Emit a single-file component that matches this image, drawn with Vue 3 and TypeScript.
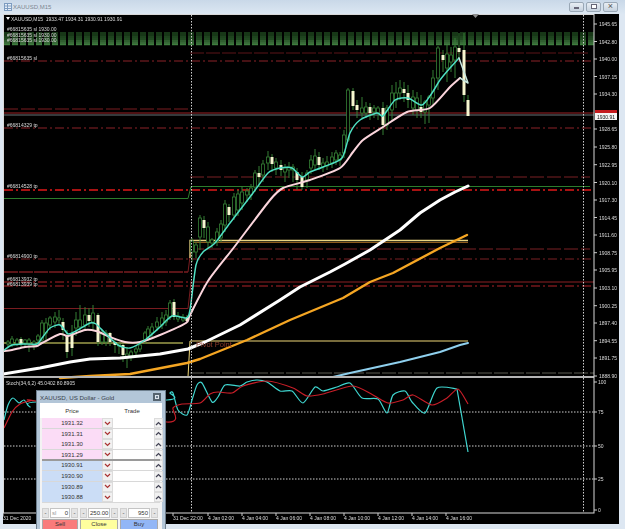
<script setup lang="ts">
type Pt = number[]

const pts = (a: Pt[]) => a.map(p => p.join(',')).join(' ')

// catmull-rom through the points, the indicators are not straight segments
const smooth = (a: Pt[]) => {
  let d = `M${a[0][0]} ${a[0][1]}`
  for (let i = 0; i < a.length - 1; i++) {
    const p0 = a[Math.max(i - 1, 0)]
    const p1 = a[i]
    const p2 = a[i + 1]
    const p3 = a[Math.min(i + 2, a.length - 1)]
    const k = 0.12
    d += ` C${(p1[0] + (p2[0] - p0[0]) * k).toFixed(1)} ${(p1[1] + (p2[1] - p0[1]) * k).toFixed(1)} ${(p2[0] - (p3[0] - p1[0]) * k).toFixed(1)} ${(p2[1] - (p3[1] - p1[1]) * k).toFixed(1)} ${p2[0]} ${p2[1]}`
  }
  return d
}

// x, wick top, body top, body bottom, wick bottom, bear?
const candles: number[][] = [
  [8,340,342,344,348,0],[12,336,339,344,347,0],[17,338,340,344,346,0],[21,337,339,344,347,1],[25,339,340,343,346,0],[29,338,340,343,352,0],[34,340,342,345,350,0],[38,334,336,340,344,0],
  [42,320,323,340,343,0],[46,318,323,333,340,0],[50,316,318,325,330,0],[55,312,317,322,328,0],[59,310,318,320,325,0],[63,318,322,330,340,1],[67,330,335,352,358,1],[72,325,333,348,356,1],
  [76,312,320,328,336,0],[80,305,320,327,333,0],[85,307,315,325,330,0],[89,308,315,321,327,1],[93,305,313,322,330,0],[98,313,315,342,346,1],[102,330,333,342,345,0],[106,330,333,342,346,0],
  [110,332,333,342,346,1],[115,338,342,345,353,1],[119,342,344,346,354,0],[123,344,345,355,362,1],[127,347,354,358,368,0],[131,350,352,356,361,0],[136,346,349,352,356,0],[140,342,345,349,352,0],
  [145,331,333,340,344,0],[148,326,329,337,341,0],[152,323,327,333,337,0],[157,317,322,327,331,0],[162,312,318,325,329,0],[166,310,315,322,326,0],[170,300,303,317,320,0],[174,299,302,317,320,1],
  [178,312,316,319,322,0],[183,314,317,320,322,0],[187,315,318,321,323,1],[192,238,241,252,262,0],[196,242,245,252,258,0],[200,215,218,237,250,0],[204,216,220,228,238,1],[208,222,227,242,248,0],
  [212,238,240,243,248,0],[217,228,232,242,246,0],[221,220,224,238,242,0],[225,200,204,225,232,0],[229,204,207,215,222,1],[234,193,197,215,220,0],[238,190,194,210,216,0],[242,186,192,203,210,0],
  [247,188,191,195,202,0],[251,184,188,195,200,0],[255,170,173,187,192,0],[259,166,173,177,186,1],[263,160,164,175,182,0],[268,151,157,163,170,0],[272,154,157,164,172,1],[276,158,162,168,175,0],
  [281,160,165,170,176,1],[285,164,168,172,182,0],[289,162,167,170,178,0],[293,164,167,170,182,0],[297,168,172,180,190,1],[302,172,177,187,190,1],[307,170,173,180,188,0],[311,155,160,168,174,0],
  [315,149,156,165,170,0],[319,152,157,165,170,1],[323,158,163,167,172,0],[327,156,162,166,170,0],[332,152,157,163,168,0],[336,150,153,160,165,0],[340,152,155,160,166,0],[344,130,135,153,158,0],
  [348,88,90,140,142,0],[353,88,91,106,110,1],[357,100,105,110,118,1],[362,97,108,113,118,0],[366,102,107,113,118,0],[370,103,107,113,120,1],[374,105,108,112,118,0],[378,106,108,113,120,0],
  [383,102,108,125,135,1],[387,105,108,125,130,0],[392,85,93,110,122,0],[396,82,93,100,108,0],[400,80,88,93,100,0],[404,82,89,93,102,1],[408,85,93,100,108,1],[413,90,97,108,115,0],
  [417,92,98,110,118,0],[421,95,107,112,118,1],[425,100,102,112,124,0],[429,95,97,105,123,0],[433,70,78,98,105,0],[438,46,48,78,90,0],[443,50,55,60,72,1],[447,45,54,68,82,0],[451,47,55,62,72,0],
  [455,38,47,60,78,0],[459,33,48,52,58,1],[464,33,50,95,102,1],[468,95,100,116,116,1],
]

const cyan = smooth([[4,350],[12,345],[24,344],[37,344],[42,338],[50,328],[60,325],[68,334],[76,331],[90,323],[96,324],[105,333],[118,345],[130,348],[145,340],[160,327],[172,316],[186,318],[190,310],[196,265],[203,252],[215,243],[230,223],[253,193],[268,173],[280,168],[292,168],[302,177],[310,172],[323,167],[342,158],[350,133],[360,120],[377,113],[383,116],[395,100],[408,98],[422,105],[432,93],[440,80],[450,68],[459,58]])
const pink = smooth([[4,351],[12,350],[25,347],[37,346],[42,343],[60,334],[68,336],[85,330],[96,331],[110,337],[125,342],[140,342],[160,335],[186,323],[190,315],[208,281],[235,246],[270,200],[283,188],[310,180],[340,168],[353,152],[363,140],[383,127],[407,112],[430,108],[450,87],[460,78]])
const maTail = pts([[459,58],[468,83],[460,78]])
const whiteMa = pts([[3,374],[40,368],[70,362],[90,359],[120,358],[160,354],[188,349],[205,342],[240,325],[280,300],[300,287],[330,272],[345,264],[370,250],[400,230],[420,213],[440,200],[455,192],[468,186]])
const orangeMa = pts([[60,378],[90,376],[130,374],[187,363],[200,359],[247,340],[290,320],[343,298],[370,282],[393,273],[440,248],[467,235]])
const blueMa = pts([[333,377],[350,373],[400,362],[440,352],[460,345],[468,343]])
const stochMain = smooth([[4,420],[8,405],[13,398],[19,403],[24,400],[30,407],[36,402],[167,400],[170,393],[173,393],[178,410],[187,415],[192,400],[197,385],[202,383],[212,402],[218,397],[225,385],[240,386],[247,382],[257,380],[267,382],[280,391],[292,391],[303,403],[315,387],[323,391],[337,387],[350,383],[362,398],[378,399],[387,413],[393,395],[405,391],[412,402],[425,413],[437,388],[457,389]])
const stochTail = pts([[457,389],[468,452]])
const stochSignal = smooth([[4,428],[12,412],[20,404],[30,401],[36,401],[167,422],[173,408],[182,404],[200,403],[210,394],[218,392],[232,393],[243,386],[267,381],[293,388],[307,396],[323,394],[353,386],[373,395],[388,403],[403,400],[413,395],[432,405],[447,398],[458,389],[468,404]])

// the stacked stop orders, darker at the top of the block
const bandLines = [
  { y: 33, c: '#1f4a1f' }, { y: 35, c: '#1f4a1f' }, { y: 37, c: '#285a28' }, { y: 39, c: '#2c622c' },
  { y: 41, c: '#3f7d3f' }, { y: 43, c: '#4a8a4a' }, { y: 44.5, c: '#3f7d3f' },
]

const prices = [
  ['1945.65', 24], ['1942.80', 41.5], ['1940.00', 59], ['1937.15', 76.5], ['1934.30', 94], ['1928.65', 129],
  ['1925.80', 147], ['1922.95', 164.7], ['1920.10', 182.5], ['1917.30', 200], ['1914.45', 217.5], ['1911.60', 235],
  ['1908.75', 252.7], ['1905.95', 270], ['1903.10', 288], ['1900.25', 305.7], ['1897.40', 323], ['1894.55', 340.7],
  ['1891.75', 358], ['1888.90', 376],
] as [string, number][]

const stochScale = [['100', 382], ['75', 412], ['50', 446], ['25', 479], ['0', 510]] as [string, number][]

const times = [
  ['31 Dec 2020', 3], ['31 Dec 22:00', 173], ['4 Jan 02:00', 208], ['4 Jan 04:00', 242], ['4 Jan 06:00', 276],
  ['4 Jan 08:00', 310], ['4 Jan 10:00', 344], ['4 Jan 12:00', 378], ['4 Jan 14:00', 412], ['4 Jan 16:00', 446],
] as [string, number][]

const stackLabels = [31, 36.5, 42]

const askRows = ['1931.32', '1931.31', '1931.30', '1931.29']
const bidRows = ['1930.91', '1930.90', '1930.89', '1930.88']
</script>

<template>
  <div class="window">
    <div class="titlebar">
      <svg class="app-icon" width="8" height="8" viewBox="0 0 8 8">
        <rect x="0.5" y="0.5" width="7" height="7" fill="#e6eef8" stroke="#7d9cc0" />
        <path d="M1 3h6M1 5.500h6M3.500 1v6" stroke="#7d9cc0" fill="none" />
      </svg>
      <span class="title-text">XAUUSD,M15</span>
      <div class="win-buttons">
        <span class="win-btn"><i class="min-glyph"></i></span>
        <span class="win-btn"><i class="max-glyph"></i></span>
        <span class="win-btn close">×</span>
      </div>
    </div>

    <div class="chart">
      <svg width="616" height="510" viewBox="3 14 616 510" class="plot">
        <rect x="3" y="14" width="616" height="510" fill="#000" />

        <!-- order levels behind the bars -->
        <g fill="none">
          <line v-for="b in bandLines" :key="b.y" x1="4" x2="594" :y1="b.y" :y2="b.y" :stroke="b.c" stroke-width="1.3" stroke-dasharray="6 2" />
          <line x1="190" x2="590" y1="53" y2="53" stroke="#5c1418" stroke-dasharray="14 2" />
          <line x1="4" x2="594" y1="61" y2="61" stroke="#8c2228" stroke-dasharray="9 3 2 3" />
          <line x1="4" x2="188" y1="109" y2="109" stroke="#7a1c20" stroke-dasharray="14 3" />
          <line x1="4" x2="594" y1="128" y2="128" stroke="#8c2228" stroke-dasharray="9 3 2 3" />
          <line x1="190" x2="590" y1="177" y2="177" stroke="#7a2024" stroke-dasharray="14 3" />
          <line x1="4" x2="594" y1="190" y2="190" stroke="#e01818" stroke-width="1.5" stroke-dasharray="9 3 2 3" />
          <polyline points="4,198.5 188,198.5 191,186.5 590,186.5" stroke="#2c7d2c" />
          <line x1="190" x2="590" y1="249" y2="249" stroke="#7a2024" stroke-dasharray="14 3" />
          <line x1="4" x2="594" y1="259" y2="259" stroke="#7a2024" stroke-dasharray="9 3 2 3" />
          <line x1="4" x2="188" y1="272" y2="272" stroke="#7a1c20" stroke-width="1.3" stroke-dasharray="14 1" />
          <polyline points="188,272 191,249" stroke="#7a1c20" />
          <line x1="190" x2="594" y1="282" y2="282" stroke="#8c2024" />
          <line x1="4" x2="188" y1="282" y2="282" stroke="#b02228" stroke-dasharray="9 3 2 3" />
          <line x1="4" x2="594" y1="286" y2="286" stroke="#b02228" stroke-dasharray="9 3 2 3" />
          <polyline points="4,308.5 188,308.5 191,282" stroke="#7a1c20" />
          <line x1="190" x2="594" y1="373" y2="373" stroke="#5a5a50" stroke-dasharray="14 2" />
          <line x1="4" x2="183" y1="343" y2="343" stroke="#ecec70" />
          <polyline points="188,377 190,341 468,341" stroke="#f0d878" />
          <polyline points="190,258 190,240.5 468,240.5" stroke="#e8d480" stroke-width="1.3" />
          <line x1="190" x2="468" y1="242.5" y2="242.5" stroke="#8c5a1c" />
          <line x1="4" x2="594" y1="113" y2="113" stroke="#9c2226" />
          <line x1="4" x2="594" y1="115" y2="115" stroke="#6a7478" />
        </g>

        <!-- bars -->
        <g v-for="c in candles" :key="c[0]">
          <line :x1="c[0]" :x2="c[0]" :y1="c[1]" :y2="c[4]" stroke="#357f35" />
          <rect :x="c[0] - 1.5" :y="c[2]" width="3" :height="c[3] - c[2]" :fill="c[5] ? '#f6f6cf' : '#000'" :stroke="c[5] ? 'none' : '#357f35'" stroke-width="0.8" />
        </g>

        <!-- moving averages -->
        <g fill="none" stroke-linejoin="round" stroke-linecap="round">
          <polyline :points="blueMa" stroke="#8fd0ee" stroke-width="2" />
          <polyline :points="orangeMa" stroke="#f5a623" stroke-width="2.4" />
          <polyline :points="whiteMa" stroke="#fff" stroke-width="3" />
          <path :d="pink" stroke="#fbd5dc" stroke-width="2" />
          <path :d="cyan" stroke="#4fe0c4" stroke-width="1.5" />
          <polyline :points="maTail" stroke="#c8e8e0" stroke-width="1.5" />
        </g>

        <text x="196" y="347" class="pivot">Pivot Point</text>
        <text v-for="y in stackLabels" :key="y" x="7" :y="y" class="lbl">#66815635 sl 1930.00</text>
        <text x="7" y="60" class="lbl">#66815635 sl</text>
        <text x="7" y="127" class="lbl">#66814329 tp</text>
        <text x="7" y="188" class="lbl">#66814528 tp</text>
        <text x="7" y="258" class="lbl">#66814900 tp</text>
        <text x="7" y="280.500" class="lbl">#66813932 tp</text>
        <text x="7" y="286" class="lbl">#66813939 tp</text>

        <!-- stochastic window -->
        <line x1="3" x2="594" y1="377" y2="377" stroke="#b4b4b4" stroke-width="2" />
        <g stroke="#cfcfcf" stroke-dasharray="1.5 1.5">
          <line x1="4" x2="594" y1="412" y2="412" />
          <line x1="4" x2="594" y1="446" y2="446" />
          <line x1="4" x2="594" y1="479" y2="479" />
          <line x1="191.5" x2="191.5" y1="15" y2="513" />
          <line x1="583.5" x2="583.5" y1="15" y2="513" />
        </g>
        <g fill="none" stroke-linejoin="round">
          <path :d="stochMain" stroke="#3fd6d0" stroke-width="1.2" />
          <polyline :points="stochTail" stroke="#3fd6d0" stroke-width="1.2" />
          <path :d="stochSignal" stroke="#c81e28" stroke-width="1.2" />
        </g>
        <text x="6" y="385" class="lbl">Stoch(34,6,2) 45.0402 80.8905</text>

        <!-- chart frame and scales -->
        <rect x="3.5" y="14.5" width="590.500" height="498.500" stroke="#d8d8d8" fill="none" />
        <path d="M472 14h7l-3.500 4z" fill="#8c8c8c" />
        <path d="M6 17h4l-2 3z" fill="#fff" />
        <text x="11" y="21" class="lbl">XAUUSD,M15 &#160;1933.47 1934.31 1930.91 1930.91</text>

        <g v-for="p in prices" :key="p[0]">
          <line x1="594" x2="597" :y1="p[1]" :y2="p[1]" stroke="#ccc" />
          <text x="599" :y="p[1] + 2" class="lbl">{{ p[0] }}</text>
        </g>
        <g v-for="p in stochScale" :key="p[0]">
          <line x1="594" x2="597" :y1="p[1]" :y2="p[1]" stroke="#ccc" />
          <text x="598" :y="p[1] + 2" class="lbl">{{ p[0] }}</text>
        </g>
        <rect x="595" y="110" width="22" height="4" fill="#c41a1e" />
        <rect x="595" y="113" width="22" height="7" fill="#f4f4f4" />
        <text x="597" y="118.500" class="lbl-dark">1930.91</text>

        <g v-for="t in times" :key="t[0]">
          <line :x1="t[1]" :x2="t[1]" y1="513" y2="516" stroke="#ccc" />
          <text :x="t[1]" y="520" class="lbl">{{ t[0] }}</text>
        </g>
      </svg>
    </div>

    <!-- one click trading window -->
    <div class="depth">
      <div class="depth-title">
        <span>XAUUSD, US Dollar - Gold</span>
        <span class="depth-close"></span>
      </div>
      <div class="depth-body">
        <div class="depth-head">
          <span>Price</span>
          <span>Trade</span>
        </div>
        <div v-for="p in askRows" :key="p" class="row">
          <span class="price ask">{{ p }}</span>
          <span class="step down"><svg width="7" height="5" viewBox="0 0 7 5"><path d="M1 1l2.500 2.500L6 1" fill="none" stroke="#a33" stroke-width="1.200" /></svg></span>
          <span class="trade"></span>
          <span class="step"><svg width="7" height="5" viewBox="0 0 7 5"><path d="M1 4l2.500-2.500L6 4" fill="none" stroke="#445" stroke-width="1.200" /></svg></span>
        </div>
        <div class="spread"></div>
        <div v-for="p in bidRows" :key="p" class="row">
          <span class="price bid">{{ p }}</span>
          <span class="step down"><svg width="7" height="5" viewBox="0 0 7 5"><path d="M1 1l2.500 2.500L6 1" fill="none" stroke="#a33" stroke-width="1.200" /></svg></span>
          <span class="trade"></span>
          <span class="step"><svg width="7" height="5" viewBox="0 0 7 5"><path d="M1 4l2.500-2.500L6 4" fill="none" stroke="#445" stroke-width="1.200" /></svg></span>
        </div>
        <div class="controls">
          <div class="spin"><span class="sbtn">-</span><span class="field"><em>sl</em>0</span><span class="sbtn">-</span></div>
          <div class="spin"><span class="sbtn">-</span><span class="field left">250.00</span><span class="sbtn">-</span></div>
          <div class="spin"><span class="sbtn">-</span><span class="field">950</span><span class="sbtn">-</span></div>
        </div>
        <div class="actions">
          <span class="act sell">Sell</span>
          <span class="act close-btn">Close</span>
          <span class="act buy">Buy</span>
        </div>
      </div>
    </div>
  </div>
</template>

<style scoped>
.window {
  position: relative;
  width: 625px;
  height: 529px;
  overflow: hidden;
  display: flex;
  flex-direction: column;
  background: #dde7f2;
  font-family: "Liberation Sans", Arial, sans-serif;
}

.titlebar {
  height: 14px;
  flex: none;
  display: flex;
  align-items: center;
  gap: 1px;
  padding: 0 7px 1px 4px;
  box-sizing: border-box;
  background: linear-gradient(#c9d8e8, #dce7f2);
}

.title-text {
  font-size: 6px;
  color: #7d8791;
}

.win-buttons {
  margin-left: auto;
  display: flex;
  gap: 2px;
}

.win-btn {
  width: 15px;
  height: 10px;
  box-sizing: border-box;
  display: flex;
  align-items: center;
  justify-content: center;
  border: 1px solid #9aa8b6;
  border-radius: 2px;
  background: linear-gradient(#e8eef4, #c6d2de);
  color: #555;
  font-size: 9px;
  line-height: 1;
}

.min-glyph {
  width: 5px;
  height: 2px;
  margin-top: 3px;
  background: #fff;
  border: 1px solid #667;
  box-sizing: border-box;
}

.max-glyph {
  width: 6px;
  height: 5px;
  background: #fff;
  border: 1px solid #667;
  box-sizing: border-box;
}

.chart {
  height: 510px;
  flex: none;
  margin-left: 3px;
  width: 616px;
}

.plot {
  display: block;
  filter: blur(0.3px);
}

.lbl {
  font-size: 5px;
  fill: #dcdcdc;
}

.lbl-dark {
  font-size: 5px;
  fill: #111;
}

.pivot {
  font-size: 7.500px;
  fill: #8a3a2a;
}

.depth {
  position: absolute;
  left: 36px;
  top: 390px;
  width: 130px;
  height: 139px;
  box-sizing: border-box;
  padding: 0 3px;
  background: #b3c6d8;
  border: 1px solid #6e7f8e;
  border-bottom: 0;
  display: flex;
  flex-direction: column;
}

.depth-title {
  height: 12px;
  flex: none;
  display: flex;
  align-items: center;
  justify-content: space-between;
  font-size: 6.200px;
  color: #39424c;
  padding-right: 1px;
}

.depth-close {
  width: 8px;
  height: 8px;
  box-sizing: border-box;
  background: #6d7f90;
  border: 2px solid #55636f;
  outline: 1px solid #dfe6ee;
  outline-offset: -3px;
}

.depth-body {
  flex: 1;
  background: #f3f3f3;
  padding: 0 2px;
  font-size: 6px;
  color: #333;
}

.depth-head {
  height: 15px;
  display: grid;
  grid-template-columns: 60px 60px;
  align-items: center;
  text-align: center;
  background: #fff;
  margin: 0 -2px;
  padding: 0 2px;
}

.row {
  height: 10.6px;
  display: grid;
  grid-template-columns: 60px 11px 41px 9px;
  box-sizing: border-box;
  border-bottom: 1px solid #d8d8d8;
  background: #fff;
}

.price {
  text-align: center;
  line-height: 10px;
}

.ask {
  background: #fbdcf6;
}

.bid {
  background: #cbddf6;
}

.step {
  display: flex;
  align-items: center;
  justify-content: center;
  background: #f1f1f1;
  border: 1px solid #dcdcdc;
  box-sizing: border-box;
}

.trade {
  background: #fff;
}

/* sits on the row border, does not push the bid rows down */
.spread {
  height: 2px;
  margin: -1px 0 -1px;
  position: relative;
  background: #9a9a9a;
}

.controls {
  display: grid;
  grid-template-columns: 36px 38px 38px;
  gap: 2px;
  margin-top: 5px;
  height: 9px;
}

.spin {
  display: flex;
  gap: 1px;
}

.sbtn {
  width: 7px;
  flex: none;
  text-align: center;
  line-height: 8px;
  background: #e4e4e4;
  border: 1px solid #d0d0d0;
  box-sizing: border-box;
}

.field {
  flex: 1;
  min-width: 0;
  overflow: hidden;
  display: flex;
  justify-content: flex-end;
  align-items: center;
  background: #fff;
  border: 1px solid #c4c4c4;
  box-sizing: border-box;
  padding-right: 1px;
  white-space: nowrap;
}

.field.left {
  justify-content: flex-start;
  padding-left: 1px;
}

.field em {
  margin-right: auto;
  font-style: normal;
  color: #999;
  padding-left: 1px;
}

.actions {
  display: grid;
  grid-template-columns: 36px 38px 38px;
  gap: 2px;
  margin-top: 2px;
  height: 10px;
}

.act {
  text-align: center;
  line-height: 9px;
  border: 1px solid #aaa;
  box-sizing: border-box;
}

.sell {
  background: #f97b7b;
}

.close-btn {
  background: #ffff9e;
}

.buy {
  background: #92b6f6;
}
</style>

<style>
html,
body {
  margin: 0;
  background: #dde7f2;
}
</style>
